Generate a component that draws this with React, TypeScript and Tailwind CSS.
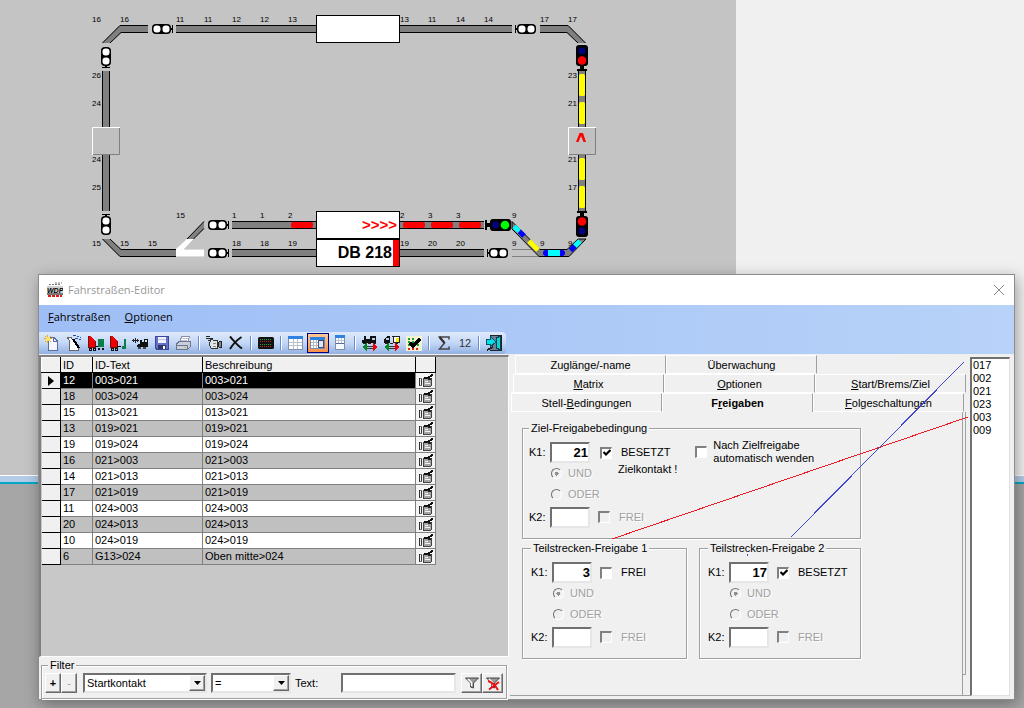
import React from "react";
import clsx from "clsx";

interface Route {
  id: string;
  text: string;
  description: string;
}

const ROUTES: Route[] = [
  { id: "12", text: "003>021", description: "003>021" },
  { id: "18", text: "003>024", description: "003>024" },
  { id: "15", text: "013>021", description: "013>021" },
  { id: "13", text: "019>021", description: "019>021" },
  { id: "19", text: "019>024", description: "019>024" },
  { id: "16", text: "021>003", description: "021>003" },
  { id: "14", text: "021>013", description: "021>013" },
  { id: "17", text: "021>019", description: "021>019" },
  { id: "11", text: "024>003", description: "024>003" },
  { id: "20", text: "024>013", description: "024>013" },
  { id: "10", text: "024>019", description: "024>019" },
  { id: "6", text: "G13>024", description: "Oben mitte>024" },
];

const CONTACTS = ["017", "002", "021", "023", "003", "009"];

// ── Track plan ─────────────────────────────────────────────────────────────────
// [x, baseline, label]
const TRACK_LABELS: [number, number, string][] = [
  [92, 22, "16"], [120, 22, "16"], [176, 22, "11"], [204, 22, "11"], [232, 22, "12"], [260, 22, "12"], [288, 22, "13"],
  [400, 22, "13"], [428, 22, "11"], [456, 22, "14"], [484, 22, "14"], [540, 22, "17"], [568, 22, "17"],
  [92, 78, "26"], [92, 106, "24"], [92, 162, "24"], [92, 190, "25"],
  [568, 78, "23"], [568, 106, "21"], [568, 162, "21"], [568, 190, "17"],
  [92, 246, "15"], [120, 246, "15"], [148, 246, "15"], [176, 218, "15"],
  [232, 218, "1"], [260, 218, "1"], [288, 218, "2"], [232, 246, "18"], [260, 246, "18"], [288, 246, "19"],
  [400, 218, "2"], [428, 218, "3"], [456, 218, "3"], [512, 218, "9"],
  [400, 246, "19"], [428, 246, "20"], [456, 246, "20"], [512, 246, "9"], [540, 246, "9"], [568, 246, "9"],
];

function Track({ x1, y1, x2, y2 }: { x1: number; y1: number; x2: number; y2: number }) {
  return (
    <g>
      <line x1={x1} y1={y1} x2={x2} y2={y2} stroke="#000" strokeWidth={8} />
      <line x1={x1} y1={y1} x2={x2} y2={y2} stroke="#808080" strokeWidth={6} />
    </g>
  );
}

function Corner({ transform }: { transform?: string }) {
  return (
    <g transform={transform}>
      <path d="M102 43 L120 25 H148 V33 H121 L110 43 Z" fill="#808080" />
      <path d="M102.5 43 L120 25.5 H148 M148 32.5 H121 L110 43" fill="none" stroke="#000" />
    </g>
  );
}

// Lamps run left to right, the mast foot is on the right
function Signal({ x, y, rotate = 0, lamps }: { x: number; y: number; rotate?: number; lamps?: [string, string] }) {
  return (
    <g transform={`translate(${x} ${y}) rotate(${rotate})`}>
      {lamps ? (
        <>
          <rect x={-11} y={-6} width={21} height={12} rx={3} />
          <rect x={9} y={-2} width={5} height={4} />
          <rect x={13} y={-5} width={2} height={10} />
          <circle cx={-5} cy={0} r={lamps[0] === "#000080" ? 3.4 : 4.3} fill={lamps[0]} />
          <circle cx={4.5} cy={0} r={lamps[1] === "#000080" ? 3.4 : 4.3} fill={lamps[1]} />
        </>
      ) : (
        <>
          <rect x={-10} y={-5} width={19} height={10} rx={4} />
          <rect x={8} y={-1} width={2} height={2} />
          <rect x={10} y={-4} width={1} height={8} />
          <rect x={-8.5} y={-3.5} width={7} height={7} rx={3} fill="#fff" />
          <rect x={0.5} y={-3.5} width={7} height={7} rx={3} fill="#fff" />
        </>
      )}
    </g>
  );
}

function TrackPlan() {
  return (
    <svg width="640" height="270" className="block" aria-label="Gleisbild">
      <Corner />
      <Corner transform="translate(688 0) scale(-1 1)" />
      <Corner transform="translate(0 282) scale(1 -1)" />
      <Track x1={176} y1={29} x2={316} y2={29} />
      <Track x1={400} y1={29} x2={512} y2={29} />
      <Track x1={106} y1={71} x2={106} y2={127} />
      <Track x1={106} y1={155} x2={106} y2={211} />
      <Track x1={148} y1={253} x2={176} y2={253} />
      <Track x1={232} y1={225} x2={316} y2={225} />
      <Track x1={232} y1={253} x2={316} y2={253} />
      <Track x1={400} y1={225} x2={484} y2={225} />
      <Track x1={400} y1={253} x2={484} y2={253} />
      <Track x1={582} y1={71} x2={582} y2={127} />
      <Track x1={582} y1={155} x2={582} y2={211} />

      {/* turnout */}
      <path d="M187 239 L204 221 V229 L193 239 Z" fill="#808080" />
      <path d="M187 239 L204 221.5 M193.5 239 L204 228.5" stroke="#000" />
      <path d="M176 249 L187 239 H193.500 L184 249 H204 V257 H176 Z" fill="#fff" />
      <path d="M184 249.500 H204 M176 256.500 H204" stroke="#ddd" />

      {/* route in use */}
      <path d="M512 249.500 H537 M512 256.500 H540" stroke="#808080" />
      <path d="M512 221.500 L540 249.500 H567 L578 239 H586 L569 256.500 H539 L512 229 Z" fill="#808080" stroke="#000" />
      <g fill="none" strokeWidth="5">
        <path d="M514 226.500 L519 231" stroke="#0ff" />
        <path d="M519.500 231.500 L524 236" stroke="#00f" />
        <path d="M529 241 L538 250" stroke="#ff0" />
        <path d="M546 253 H562" stroke="#00f" strokeWidth="6" strokeLinecap="round" />
        <path d="M548 253 H560" stroke="#0ff" strokeWidth="6" />
        <path d="M570.500 250.500 L575 246" stroke="#00f" />
        <path d="M575 246 L580 241" stroke="#0ff" />
      </g>
      {[74, 102, 158, 186].map((y) => (
        <rect key={y} x={579} y={y} width={6} height={22} rx={1.5} fill="#ff0" />
      ))}
      {[291, 403, 431, 459].map((x) => (
        <rect key={x} x={x} y={222} width={22} height={6} rx={2} fill="#f00" />
      ))}

      <Signal x={162} y={29} />
      <Signal x={526} y={29} rotate={180} />
      <Signal x={106} y={57} rotate={90} />
      <Signal x={106} y={225} rotate={-90} />
      <Signal x={218} y={225} />
      <Signal x={218} y={253} />
      <Signal x={498} y={253} rotate={180} />
      <Signal x={582} y={56} rotate={90} lamps={["#000080", "#f00"]} />
      <Signal x={582} y={226} rotate={-90} lamps={["#000080", "#f00"]} />
      <Signal x={500} y={225} rotate={180} lamps={["#0f0", "#000080"]} />

      {/* train displays */}
      <rect x={316.5} y={15.5} width={83} height={27} fill="#fff" stroke="#000" />
      <rect x={316.5} y={211.5} width={83} height={27} fill="#fff" stroke="#000" />
      <rect x={316.5} y={239.5} width={83} height={27} fill="#fff" stroke="#000" />
      <rect x={393} y={240} width={6} height={26} fill="#f00" />
      <g fontFamily="Liberation Sans, sans-serif">
        <text x={397} y={230} fontSize={15} fontWeight={700} textAnchor="end" fill="#f00">&gt;&gt;&gt;&gt;</text>
        <text x={392} y={258} fontSize={16} fontWeight={700} textAnchor="end">DB 218</text>
        {TRACK_LABELS.map(([x, y, label]) => (
          <text key={`${x}-${y}`} x={x} y={y} fontSize={8}>{label}</text>
        ))}
      </g>

      {/* direction fields */}
      {[92, 568].map((x) => (
        <g key={x}>
          <rect x={x} y={127} width={28} height={28} fill="#c0c0c0" />
          <path d={`M${x + 0.5} 155 V127.5 H${x + 28}`} fill="none" stroke="#fff" />
          <path d={`M${x + 27.5} 128 V154.5 H${x + 1}`} fill="none" stroke="#808080" />
        </g>
      ))}
      <path d="M576 142 L579.500 133 H583 L586 142 H583.500 L581 136 L578.500 142 Z" fill="#f00" />
    </svg>
  );
}

// ── Toolbar icons ──────────────────────────────────────────────────────────────
function Icon({ children }: { children: React.ReactNode }) {
  return <svg width="16" height="16" viewBox="0 0 16 16" shapeRendering="crispEdges" aria-hidden="true">{children}</svg>;
}

const NewIcon = () => (
  <Icon>
    <path d="M4.500 2.500 H10 L13.500 6 V15.500 H4.500 Z" fill="#f4f7ff" stroke="#5a6ea0" />
    <path d="M9.500 2.500 V6.500 H13.500" fill="none" stroke="#5a6ea0" />
    <path d="M3.500 0 V8 M0 3.500 H8 M1 1 L7 7 M7 1 L1 7" stroke="#e8a818" />
    <rect x="2" y="2" width="4" height="4" fill="#ffe060" />
  </Icon>
);

const WizardIcon = () => (
  <Icon>
    <path d="M1.500 2.500 H5 L6.500 4.500 L12.500 12 V15.500 H3.500 V6 Z" fill="#fff" stroke="#666" />
    <path d="M7 4 L13 13" stroke="#000" strokeWidth="2" />
    <path d="M7 0.500 H10 M11 1.500 H13 M9 3.500 H12 M13 4.500 H15 M14 2.500 H15" stroke="#2450b0" />
  </Icon>
);

const CopyTrainIcon = ({ short = false }: { short?: boolean }) => (
  <Icon>
    <path d="M0 1 H2 L7 6 V12 H0 Z" fill="#f00000" />
    <path d="M0.500 1 V12.500 H7.500 V6" fill="none" stroke="#701010" />
    <path d="M1 13 H3 V15 H1 Z M5 13 H7 V15 H5 Z" fill="none" stroke="#111" />
    <path d="M7 11.500 H11" stroke="#000" />
    {short ? (
      <path d="M14 4 H16 V14 H12 V11 H14 Z" fill="#0a8048" />
    ) : (
      <>
        <path d="M10 4 H16 V12 H10 Z" fill="#0a8048" />
        <path d="M10 13.500 H12 M14 13.500 H16" stroke="#111" strokeWidth="2" />
      </>
    )}
  </Icon>
);

const LocoIcon = () => (
  <Icon>
    <path d="M0 5.500 H7 M1.500 4 V7 M3.500 3 V8 M5.500 4 V7" stroke="#222" />
    <path d="M6 9 H8 V5 H10 V7 H12 V4 H16 V12 H5 V10 H6 Z" fill="#111" />
    <rect x="13" y="5" width="2" height="2" fill="#d8e6fc" />
    <path d="M6 13 H9 M11 13 H14" stroke="#444" strokeWidth="2" />
  </Icon>
);

const SaveIcon = () => (
  <Icon>
    <path d="M1.500 1.500 H14.500 V14.500 H3 L1.500 13 Z" fill="#6670c8" stroke="#3a4698" />
    <rect x="4" y="2" width="8" height="6" fill="#eef2fc" />
    <path d="M4 4.500 H12" stroke="#b8c4e8" />
    <rect x="4" y="10" width="8" height="4" fill="#2e3868" />
    <rect x="9" y="11" width="2" height="3" fill="#fff" />
  </Icon>
);

const PrintIcon = () => (
  <Icon>
    <path d="M5.500 1.500 H13.500 L11.500 7.500 H3.500 Z" fill="#fff" stroke="#8a90a8" />
    <path d="M0.500 9 L3 6.500 H14.500 V11.500 L11.500 14.500 H0.500 Z" fill="#c8cedc" stroke="#6c7490" />
    <path d="M1 10.500 H11.500 V14" fill="none" stroke="#6c7490" />
    <path d="M5 3.500 H12 M5 5.500 H11" stroke="#c0c4d0" />
    <rect x="8" y="12" width="2" height="1" fill="#e0c030" />
  </Icon>
);

const CameraIcon = () => (
  <Icon>
    <path d="M4.500 4.500 L9 5.500 H11.500 V13.500 H5.500 L3.500 10 Z" fill="#dfe3ea" stroke="#333" />
    <path d="M12 8 L13.500 6.500 H15.500 V12.500 H13.500 L12 11 Z" fill="#888" stroke="#222" />
    <path d="M0 1.500 H4 M0 3.500 H7 M2 5.500 H4" stroke="#222" />
    <path d="M7 8.500 H10 M7 11.500 H10" stroke="#888" />
  </Icon>
);

const DeleteIcon = () => (
  <svg width="16" height="16" viewBox="0 0 16 16" aria-hidden="true">
    <path d="M2 1.500 C6 6 10 11 14 13.500 M13.500 2 C9 5 5 9 2 14" fill="none" stroke="#111" strokeWidth="1.900" />
  </svg>
);

const MatrixIcon = () => (
  <svg width="16" height="16" viewBox="0 0 16 16" aria-hidden="true">
    <rect x="0" y="2" width="16" height="12" rx="1.500" fill="#111" />
    <g shapeRendering="crispEdges" strokeDasharray="1 1">
      <path d="M2 4.500 H14 M2 9.500 H14" stroke="#28a038" />
      <path d="M2 6.500 H14 M2 11.500 H14" stroke="#c02828" />
    </g>
  </svg>
);

const TableIcon = () => (
  <Icon>
    <rect x="0.500" y="2.500" width="14" height="12" fill="#fff" stroke="#8090a8" />
    <rect x="0" y="1" width="15" height="3" fill="#2f82e0" />
    <path d="M1 7.500 H14 M1 10.500 H14 M5.500 4 V14 M9.500 4 V14" stroke="#b8c0cc" />
  </Icon>
);

const SplitIcon = () => (
  <Icon>
    <rect x="0.500" y="3.500" width="14" height="10" fill="#fff" stroke="#7c8ca8" />
    <rect x="0" y="2" width="15" height="3" fill="#2f82e0" />
    <path d="M1 7.500 H8 M1 10.500 H8 M3.500 5 V13 M6.500 5 V13" stroke="#b0bac8" />
    <rect x="8.500" y="5.500" width="5" height="7" fill="#dfe8fa" stroke="#3c4c78" />
  </Icon>
);

const NarrowIcon = () => (
  <Icon>
    <rect x="3.500" y="1.500" width="9" height="13" fill="#f6f9ff" stroke="#8090a8" />
    <rect x="3" y="0" width="10" height="3" fill="#2f82e0" />
    <path d="M4 5.500 H12 M6.500 3 V8 M9.500 3 V8" stroke="#c0c8d4" />
    <path d="M4 8.500 H12" stroke="#5c6c90" />
  </Icon>
);

const ShuntIcon = ({ card = false }: { card?: boolean }) => (
  <Icon>
    <path d={card ? "M0 4 L3 1 H6 V8 H0 Z" : "M0 5 H2 V1 H4 V4 H8 V1 H14 V8 H0 Z"} fill="#111" />
    {card ? (
      <>
        <path d="M8 1.500 H15.500 V7.500 H9.500 V1" fill="#fff" stroke="#222" />
        <rect x="12" y="3" width="3" height="4" fill="#f8e800" />
        <rect x="2" y="3" width="3" height="2" fill="#b9cdf0" />
      </>
    ) : (
      <rect x="10" y="3" width="3" height="2" fill="#b9cdf0" />
    )}
    <path d="M1 8.500 H14" stroke="#222" strokeDasharray="3 2" />
    <path d="M0 12 L5 8 V16 Z" fill="#008a20" />
    <path d="M16 12 L11 8 V16 Z" fill="#f00000" />
    <path d="M5 11.500 H11 M5 13.500 H11" stroke="#333" />
  </Icon>
);

const CheckMatrixIcon = () => (
  <Icon>
    <rect x="0" y="1" width="16" height="15" fill="#f4f2d0" />
    <g strokeDasharray="2 2">
      <path d="M2 4 H8 M2 7 H14 M2 10 H6 M11 10 H14" stroke="#18a030" strokeWidth="2" />
      <path d="M2 14 H14" stroke="#e02020" strokeWidth="2" />
    </g>
    <path d="M4 8 L7 11 L14 4" fill="none" stroke="#000" strokeWidth="3" />
  </Icon>
);

const SumIcon = () => (
  <svg width="16" height="16" viewBox="0 0 16 16" aria-hidden="true">
    <path d="M13 4.500 V2 H3.500 L8.500 8 L3.500 14 H13 V11.500" fill="none" stroke="#444" strokeWidth="1.500" />
    <path d="M3.500 2 L8.500 8" stroke="#333" strokeWidth="2.200" />
  </svg>
);

const ExitIcon = () => (
  <Icon>
    <path d="M4 0.500 H15.500 V15.500 H4" fill="#6f7f94" stroke="#222" />
    <path d="M10.500 3 L14.500 1 V15 L10.500 13 Z" fill="#10d0d0" stroke="#004050" />
    <path d="M0 4 H4 V1 L10 7 L4 12 V9 H0 Z" fill="#00e0e8" stroke="#045060" />
    <path d="M1 15 L7 12" stroke="#222" strokeWidth="2" />
  </Icon>
);

const RowCameraIcon = () => (
  <Icon>
    <path d="M1.500 5 V13 M3.500 6 V12" stroke="#333" />
    <path d="M2 5.500 H4 M2 12.500 H4" stroke="#777" />
    <path d="M5.500 5.500 H13.500 V12.500 L12 13.500 H6 L5.500 12.500 Z" fill="#a4a4a4" stroke="#444" />
    <path d="M6 4.500 L9 5.500 L15 1.500" fill="none" stroke="#111" strokeWidth="2" />
    <path d="M10 5 H13 V7 H10 Z" fill="#222" />
    <path d="M7 8.500 H10 M7 10.500 H12" stroke="#f4f4f4" />
  </Icon>
);

const LogoIcon = () => (
  <svg width="16" height="16" viewBox="0 0 16 16" aria-hidden="true">
    <rect y="4" width="16" height="9" fill="#cfcfcf" />
    <path d="M2 2.500 H13 M8 1 H15" stroke="#777" strokeDasharray="2 1" />
    <text x="0" y="10.500" fontSize="7" fontWeight="700" fontStyle="italic" fontFamily="Liberation Sans, sans-serif">WDP</text>
    <path d="M0 12 H16" stroke="#222" />
    <path d="M1 14 H15" stroke="#e01818" strokeWidth="2" strokeDasharray="3 1" />
  </svg>
);

function ToolButton({ label, active = false, children }: { label: string; active?: boolean; children: React.ReactNode }) {
  return (
    <button
      type="button"
      aria-label={label}
      className={clsx(
        "flex h-5 w-[22px] shrink-0 items-center justify-center",
        active && "border border-[#000080] bg-gradient-to-b from-[#ffc896] to-[#f89048]"
      )}
    >
      {children}
    </button>
  );
}

const Divider = () => <span className="mx-[3px] h-[14px] w-0.5 shrink-0 border-r border-l border-r-white border-l-[#6a8ccb]" />;

function Toolbar() {
  return (
    <div role="toolbar" className="flex h-[22px] w-[467px] items-center rounded-r bg-gradient-to-b from-[#dfeafc] via-[#c3d7f6] to-[#92b0e2] pl-0.5">
      <ToolButton label="Neu"><NewIcon /></ToolButton>
      <ToolButton label="Assistent"><WizardIcon /></ToolButton>
      <ToolButton label="Kopieren"><CopyTrainIcon /></ToolButton>
      <ToolButton label="Teilen"><CopyTrainIcon short /></ToolButton>
      <ToolButton label="Umkehren"><LocoIcon /></ToolButton>
      <ToolButton label="Speichern"><SaveIcon /></ToolButton>
      <ToolButton label="Drucken"><PrintIcon /></ToolButton>
      <Divider />
      <ToolButton label="Aufzeichnen"><CameraIcon /></ToolButton>
      <ToolButton label="Löschen"><DeleteIcon /></ToolButton>
      <Divider />
      <ToolButton label="Matrix"><MatrixIcon /></ToolButton>
      <Divider />
      <ToolButton label="Tabelle"><TableIcon /></ToolButton>
      <ToolButton label="Tabelle und Detail" active><SplitIcon /></ToolButton>
      <ToolButton label="Detail"><NarrowIcon /></ToolButton>
      <Divider />
      <ToolButton label="Fahrstraße stellen"><ShuntIcon /></ToolButton>
      <ToolButton label="Fahrstraße mit Zug"><ShuntIcon card /></ToolButton>
      <ToolButton label="Prüfen"><CheckMatrixIcon /></ToolButton>
      <Divider />
      <ToolButton label="Anzahl"><SumIcon /></ToolButton>
      <span className="w-5 pl-1 text-[11px] text-[#333]">12</span>
      <Divider />
      <ToolButton label="Beenden"><ExitIcon /></ToolButton>
    </div>
  );
}

// ── Route table ────────────────────────────────────────────────────────────────
function RouteTable() {
  const head = "border-r border-b border-black border-t border-l border-t-white border-l-white bg-[#f0f0f0] px-0.5 text-left font-normal leading-[14px]";
  return (
    <div className="min-h-0 flex-1 overflow-hidden border-t-2 border-l-2 border-t-[#808080] border-l-[#808080] border-r border-b border-r-white border-b-white bg-[#c8c8c8]">
      <table className="w-[395px] table-fixed border-collapse">
        <colgroup>
          <col className="w-[19px]" />
          <col className="w-8" />
          <col className="w-[110px]" />
          <col />
          <col className="w-5" />
        </colgroup>
        <thead>
          <tr className="h-[15px]">
            <th className={head} />
            <th className={head}>ID</th>
            <th className={head}>ID-Text</th>
            <th className={head}>Beschreibung</th>
            <th className={head} />
          </tr>
        </thead>
        <tbody>
          {ROUTES.map((route, i) => {
            const cell = "border-r border-b border-[#808080] px-0.5 leading-[15px]";
            return (
              <tr key={route.id} className={clsx("h-4", i === 0 ? "bg-black text-white" : i % 2 ? "bg-[#c0c0c0]" : "bg-white")}>
                <td className="border-r border-b border-black bg-[#f0f0f0] text-black">
                  {i === 0 && (
                    <svg width="6" height="10" viewBox="0 0 6 10" className="ml-1.5 block" aria-hidden="true"><path d="M0 0 L6 5 L0 10 Z" /></svg>
                  )}
                </td>
                <td className={cell}>{route.id}</td>
                <td className={cell}>{route.text}</td>
                <td className={cell}>{route.description}</td>
                <td className="border-r border-b border-[#808080] bg-[#f4f4f4]">
                  <button type="button" aria-label={`Aufzeichnen ${route.id}`} className="flex h-[15px] w-full items-center justify-center overflow-hidden">
                    <RowCameraIcon />
                  </button>
                </td>
              </tr>
            );
          })}
        </tbody>
      </table>
    </div>
  );
}

// ── Filter bar ─────────────────────────────────────────────────────────────────
const RAISED = "border border-t-white border-l-white border-r-[#696969] border-b-[#696969] bg-[#f0f0f0] shadow-[inset_-1px_-1px_0_#a0a0a0]";
const SUNKEN = "border-2 border-t-[#707070] border-l-[#707070] border-r-[#e6e6e6] border-b-[#e6e6e6] bg-white";
const GROUP = "border border-[#a0a0a0] shadow-[1px_1px_0_#fff,inset_1px_1px_0_#fff]";

function Combo({ label, value, className }: { label: string; value: string; className: string }) {
  return (
    <div className={clsx("relative h-5", className)}>
      <select aria-label={label} defaultValue={value} className={clsx("h-5 w-full appearance-none pl-0.5 text-[11px] leading-4 outline-none", SUNKEN)}>
        <option>{value}</option>
      </select>
      <span className={clsx("pointer-events-none absolute top-0.5 right-0.5 flex h-4 w-4 items-center justify-center", RAISED)}>
        <svg width="7" height="4" viewBox="0 0 7 4" aria-hidden="true"><path d="M0 0 H7 L3.500 4 Z" /></svg>
      </span>
    </div>
  );
}

function FilterBar() {
  return (
    <fieldset className={clsx("mx-0.5 mt-0.5 h-[40px]", GROUP)}>
      <legend className="ml-1.5 bg-[#f0f0f0] px-0.5 leading-3">Filter</legend>
      <div className="flex items-center pt-0.5 pl-[3px]">
        <button type="button" className={clsx("h-5 w-4 font-bold leading-4", RAISED)}>+</button>
        <button type="button" disabled className={clsx("mr-1.5 h-5 w-4 leading-4 text-[#a0a0a0]", RAISED)}>-</button>
        <Combo label="Filterfeld" value="Startkontakt" className="w-[124px]" />
        <Combo label="Vergleich" value="=" className="ml-1 w-20" />
        <label htmlFor="filter-text" className="ml-1 w-[46px]">Text:</label>
        <input id="filter-text" className={clsx("h-5 w-[115px] px-1 outline-none", SUNKEN)} />
        <button type="button" aria-label="Filter anwenden" className={clsx("ml-[5px] flex h-5 w-[21px] items-center justify-center", RAISED)}>
          <FunnelIcon />
        </button>
        <button type="button" aria-label="Filter löschen" className={clsx("flex h-5 w-[21px] items-center justify-center", RAISED)}>
          <FunnelIcon clear />
        </button>
      </div>
    </fieldset>
  );
}

function FunnelIcon({ clear = false }: { clear?: boolean }) {
  return (
    <svg width="16" height="16" viewBox="0 0 16 16" aria-hidden="true">
      <path d="M1.500 3 H14.500 L9.500 8 V13 L6.500 12 V8 Z" fill="#999" stroke="#444" />
      <path d="M4 4 L7.500 7.500 V11" fill="none" stroke="#fff" strokeWidth="1.500" />
      {clear && <path d="M3 6 Q9 8 13 15 M14 7 L4 14.500" fill="none" stroke="#f01010" strokeWidth="2" />}
    </svg>
  );
}

// ── Conditions ─────────────────────────────────────────────────────────────────
function Check({ label, checked = false, disabled = false, className }: { label: React.ReactNode; checked?: boolean; disabled?: boolean; className?: string }) {
  return (
    <label className={clsx("relative flex items-center", disabled && "text-[#a0a0a0] [text-shadow:1px_1px_0_#fff]", className)}>
      <input
        type="checkbox"
        defaultChecked={checked}
        disabled={disabled}
        className={clsx("peer h-3 w-3 shrink-0 appearance-none border-t-2 border-l-2 border-r border-b border-t-[#808080] border-l-[#808080] border-r-white border-b-white", disabled ? "bg-[#f0f0f0]" : "bg-white")}
      />
      <svg width="8" height="8" viewBox="0 0 8 8" className="pointer-events-none absolute left-[3px] hidden peer-checked:block" aria-hidden="true">
        <path d="M0.500 3 L3 5.500 L7.500 1" fill="none" stroke="#000" strokeWidth="2.200" />
      </svg>
      <span className="leading-[13px]">{label}</span>
    </label>
  );
}

function Radio({ name, label, checked = false }: { name: string; label: string; checked?: boolean }) {
  return (
    <label className="flex h-[21px] items-center gap-1.5 text-[#a0a0a0] [text-shadow:1px_1px_0_#fff]">
      <input
        type="radio"
        name={name}
        defaultChecked={checked}
        disabled
        className="h-[11px] w-[11px] appearance-none rounded-full border border-t-[#707070] border-l-[#707070] border-r-white border-b-white checked:bg-[radial-gradient(#909090_0_2px,transparent_2px)]"
      />
      {label}
    </label>
  );
}

interface ConditionProps {
  name: string;
  value: string;
  state: string;
  checked?: boolean;
  note?: string;
}

function Condition({ name, value, state, checked, note }: ConditionProps) {
  const field = clsx("h-[21px] w-10 text-right text-[13px] font-bold outline-none", SUNKEN);
  return (
    <div>
      <div className="flex h-[21px] items-center">
        <label htmlFor={`${name}-k1`} className="w-[21px]">K1:</label>
        <input id={`${name}-k1`} defaultValue={value} className={field} />
        <Check label={state} checked={checked} className={clsx("gap-[9px]", note ? "ml-2.5" : "ml-2")} />
      </div>
      <div className="ml-[22px] flex">
        <div className="w-[67px]">
          <Radio name={name} label="UND" checked />
          <Radio name={name} label="ODER" />
        </div>
        {note && <span className="leading-[13px]">{note}</span>}
      </div>
      <div className="flex h-6 items-center">
        <label htmlFor={`${name}-k2`} className="w-[21px]">K2:</label>
        <input id={`${name}-k2`} disabled className={field} />
        <Check label="FREI" disabled className="ml-2 gap-[9px]" />
      </div>
    </div>
  );
}

function Group({ title, className, children }: { title: string; className?: string; children: React.ReactNode }) {
  return (
    <fieldset className={clsx("h-[117px]", GROUP, className)}>
      <legend className="bg-[#f0f0f0] px-0.5 leading-3">{title}</legend>
      {children}
    </fieldset>
  );
}

// ── Tabs ───────────────────────────────────────────────────────────────────────
function Tab({ before = "", hot = "", after = "", active = false }: { before?: string; hot?: string; after?: string; active?: boolean }) {
  return (
    <button
      type="button"
      role="tab"
      aria-selected={active}
      className={clsx(
        "h-[19px] border-t border-l border-t-white border-l-white border-r border-r-[#a0a0a0] leading-[18px]",
        active ? "font-bold" : "border-b border-b-white"
      )}
    >
      {before}<u>{hot}</u>{after}
    </button>
  );
}

function Details() {
  return (
    <section className="relative flex min-w-0 flex-1 flex-col pb-[3px] pl-px">
      <div role="tablist">
        <div className="mr-0.5 ml-[5px] grid grid-cols-3">
          <Tab before="Zuglänge/-name" />
          <Tab before="Überwachung" />
        </div>
        <div className="mr-1 ml-[3px] grid grid-cols-3">
          <Tab hot="M" after="atrix" />
          <Tab hot="O" after="ptionen" />
          <Tab hot="S" after="tart/Brems/Ziel" />
        </div>
        <div className="mr-1.5 ml-px grid grid-cols-3">
          <Tab before="Stell-" hot="B" after="edingungen" />
          <Tab before="F" hot="r" after="eigaben" active />
          <Tab hot="F" after="olgeschaltungen" />
        </div>
      </div>
      <div className="flex flex-1 items-start border-b border-[#a0a0a0] pr-1">
        <div className="flex-1 self-stretch border-r border-[#a0a0a0] pt-2.5 pl-3">
          <div className="w-[339px]">
            <Group title="Ziel-Freigabebedingung" className="pl-1.5">
              <div className="flex pt-2">
                <Condition name="ziel" value="21" state="BESETZT" checked note="Zielkontakt !" />
                <Check label={<>Nach Zielfreigabe<br />automatisch wenden</>} className="mt-[-3px] ml-[18px] gap-1.5 self-start" />
              </div>
            </Group>
            <div className="mt-[3px] grid grid-cols-[165px_162px] gap-3">
              <Group title="Teilstrecken-Freigabe 1" className="pl-2"><div className="pt-2"><Condition name="teil1" value="3" state="FREI" /></div></Group>
              <Group title="Teilstrecken-Freigabe 2" className="pl-2"><div className="pt-2"><Condition name="teil2" value="17" state="BESETZT" checked /></div></Group>
            </div>
          </div>
        </div>
        <div className="mb-5 w-[3px] self-stretch border-r border-b border-[#a0a0a0]" />
      </div>
      {/* links from the release contacts to the groups */}
      <svg className="pointer-events-none absolute top-0 left-0 overflow-visible" width="460" height="200" shapeRendering="crispEdges" aria-hidden="true">
        <path d="M103 184 L459 62" stroke="#ed1c24" />
        <path d="M282 182 L455 7 M238.500 199 V201" stroke="#3f48cc" />
      </svg>
    </section>
  );
}

// ── Editor window ──────────────────────────────────────────────────────────────
function EditorWindow() {
  return (
    <main className="absolute top-[274px] right-[9px] bottom-2 left-[38px] flex flex-col border border-[#8c8c8c] bg-[#f0f0f0] shadow-[2px_4px_14px_rgba(0,0,0,0.35)]">
      <header className="flex h-[30px] shrink-0 items-center bg-white pr-2.5 pl-2 font-['Open_Sans',sans-serif] text-[11px] text-[#999]">
        <LogoIcon />
        <h1 className="ml-[5px] flex-1">Fahrstraßen-Editor</h1>
        <button type="button" aria-label="Schließen">
          <svg width="10" height="10" viewBox="0 0 10 10" className="block" aria-hidden="true"><path d="M0 0 L10 10 M10 0 L0 10" stroke="#888" /></svg>
        </button>
      </header>
      <div className="h-[49px] shrink-0 bg-gradient-to-r from-[#9ebef5] to-[#b8d2f8]">
        <nav className="flex h-[27px] items-center gap-3.5 pb-0.5 pl-[9px] font-['Open_Sans',sans-serif] text-[11px]">
          <button type="button"><u>F</u>ahrstraßen</button>
          <button type="button"><u>O</u>ptionen</button>
        </nav>
        <Toolbar />
      </div>
      <div className="flex min-h-0 flex-1 pt-px">
        <div className="flex w-[470px] shrink-0 flex-col">
          <RouteTable />
          <FilterBar />
        </div>
        <Details />
        <ul className="mt-0.5 mr-1 mb-[3px] w-10 border-t-2 border-l-2 border-r border-b border-t-[#707070] border-l-[#707070] border-r-[#e0e0e0] border-b-[#e0e0e0] bg-white pl-px leading-[13px]">
          {CONTACTS.map((c) => <li key={c}>{c}</li>)}
        </ul>
      </div>
    </main>
  );
}

export default function App() {
  return (
    <div className="relative flex min-h-screen flex-col bg-[#a6a6a6] font-['Liberation_Sans',Arial,sans-serif] text-[11px] text-black">
      <div className="flex h-[475px]">
        <div className="w-[736px] bg-[#c4c4c4]"><TrackPlan /></div>
        <div className="flex-1 bg-[#f0f0f0]" />
      </div>
      <div className="h-[9px] border-t border-b-2 border-t-white border-b-[#00a8c8] bg-[#b4cce8]" />
      <EditorWindow />
    </div>
  );
}
